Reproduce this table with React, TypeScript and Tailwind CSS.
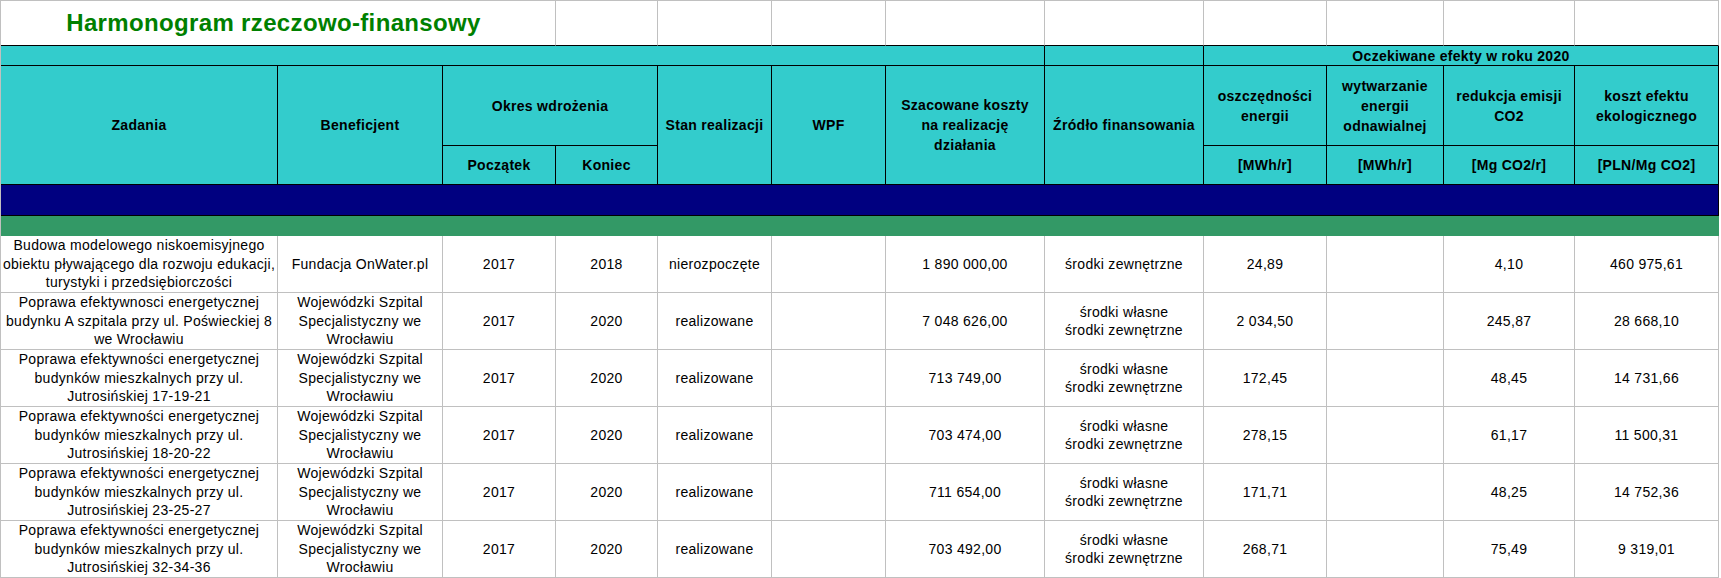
import * as React from "react";

const GRID =
    "grid grid-cols-[277px_165px_113px_102px_114px_114px_159px_159px_123px_117px_131px_144px] grid-rows-[46px_20px_80px_39px_31px_20px_repeat(6,57px)]";

const HEAD =
    "flex items-center justify-center text-center bg-[#33cccc] border-r border-b border-black font-bold text-[14px] leading-[20px] tracking-[0.3px] text-black";

const BODY =
    "flex flex-col items-center justify-center text-center border-r border-b border-[#c0c0c0] text-[14px] leading-[18.5px] tracking-[0.3px] text-black whitespace-nowrap";

interface Row {
    task: string[];
    beneficiary: string[];
    start: string;
    end: string;
    status: string;
    cost: string;
    source: string[];
    energy: string;
    renewable: string;
    co2: string;
    effectCost: string;
}

const WSS = ["Wojewódzki Szpital", "Specjalistyczny we", "Wrocławiu"];
const BOTH = ["środki własne", "środki zewnętrzne"];

const rows: Row[] = [
    {
        task: ["Budowa modelowego niskoemisyjnego", "obiektu pływającego dla rozwoju edukacji,", "turystyki i przedsiębiorczości"],
        beneficiary: ["Fundacja OnWater.pl"],
        start: "2017",
        end: "2018",
        status: "nierozpoczęte",
        cost: "1 890 000,00",
        source: ["środki zewnętrzne"],
        energy: "24,89",
        renewable: "",
        co2: "4,10",
        effectCost: "460 975,61",
    },
    {
        task: ["Poprawa efektywnosci energetycznej", "budynku A szpitala przy ul. Poświeckiej 8", "we Wrocławiu"],
        beneficiary: WSS,
        start: "2017",
        end: "2020",
        status: "realizowane",
        cost: "7 048 626,00",
        source: BOTH,
        energy: "2 034,50",
        renewable: "",
        co2: "245,87",
        effectCost: "28 668,10",
    },
    {
        task: ["Poprawa efektywności energetycznej", "budynków mieszkalnych przy ul.", "Jutrosińskiej 17-19-21"],
        beneficiary: WSS,
        start: "2017",
        end: "2020",
        status: "realizowane",
        cost: "713 749,00",
        source: BOTH,
        energy: "172,45",
        renewable: "",
        co2: "48,45",
        effectCost: "14 731,66",
    },
    {
        task: ["Poprawa efektywności energetycznej", "budynków mieszkalnych przy ul.", "Jutrosińskiej 18-20-22"],
        beneficiary: WSS,
        start: "2017",
        end: "2020",
        status: "realizowane",
        cost: "703 474,00",
        source: BOTH,
        energy: "278,15",
        renewable: "",
        co2: "61,17",
        effectCost: "11 500,31",
    },
    {
        task: ["Poprawa efektywności energetycznej", "budynków mieszkalnych przy ul.", "Jutrosińskiej 23-25-27"],
        beneficiary: WSS,
        start: "2017",
        end: "2020",
        status: "realizowane",
        cost: "711 654,00",
        source: BOTH,
        energy: "171,71",
        renewable: "",
        co2: "48,25",
        effectCost: "14 752,36",
    },
    {
        task: ["Poprawa efektywności energetycznej", "budynków mieszkalnych przy ul.", "Jutrosińskiej 32-34-36"],
        beneficiary: WSS,
        start: "2017",
        end: "2020",
        status: "realizowane",
        cost: "703 492,00",
        source: BOTH,
        energy: "268,71",
        renewable: "",
        co2: "75,49",
        effectCost: "9 319,01",
    },
];

function Lines({ lines }: { lines: string[] }) {
    return (
        <>
            {lines.map((l, i) => (
                <span key={i}>{l}</span>
            ))}
        </>
    );
}

export default function App() {
    return (
        <div className="w-[1721px] h-[578px] bg-white overflow-hidden font-['Liberation_Sans',Arial,sans-serif]">
            <div className={`${GRID} w-[1720px] border-l border-[#c0c0c0]`}>
                {/* Title row */}
                <div className="col-span-3 flex items-center justify-center pr-[9px] border-t border-r border-b border-t-[#c0c0c0] border-r-[#c0c0c0] border-b-black">
                    <span className="text-[24px] font-bold tracking-[0.35px] text-[#008000]">
                        Harmonogram rzeczowo-finansowy
                    </span>
                </div>
                {Array.from({ length: 9 }).map((_, i) => (
                    <div
                        key={i}
                        className="border-t border-r border-b border-t-[#c0c0c0] border-r-[#c0c0c0] border-b-black"
                    />
                ))}

                {/* Header top row */}
                <div className={`${HEAD} col-span-7`} />
                <div className={HEAD} />
                <div className={`${HEAD} col-span-4`}>Oczekiwane efekty w roku 2020</div>

                {/* Header main row */}
                <div className={`${HEAD} row-span-2`}>Zadania</div>
                <div className={`${HEAD} row-span-2`}>Beneficjent</div>
                <div className={`${HEAD} col-span-2`}>Okres wdrożenia</div>
                <div className={`${HEAD} row-span-2`}>Stan realizacji</div>
                <div className={`${HEAD} row-span-2`}>WPF</div>
                <div className={`${HEAD} row-span-2 flex-col`}>
                    <span>Szacowane koszty</span>
                    <span>na realizację</span>
                    <span>działania</span>
                </div>
                <div className={`${HEAD} row-span-2`}>Źródło finansowania</div>
                <div className={`${HEAD} flex-col`}>
                    <span>oszczędności</span>
                    <span>energii</span>
                </div>
                <div className={`${HEAD} flex-col`}>
                    <span>wytwarzanie</span>
                    <span>energii</span>
                    <span>odnawialnej</span>
                </div>
                <div className={`${HEAD} flex-col`}>
                    <span>redukcja emisji</span>
                    <span>CO2</span>
                </div>
                <div className={`${HEAD} flex-col`}>
                    <span>koszt efektu</span>
                    <span>ekologicznego</span>
                </div>

                {/* Header units row */}
                <div className={HEAD}>Początek</div>
                <div className={HEAD}>Koniec</div>
                <div className={HEAD}>[MWh/r]</div>
                <div className={HEAD}>[MWh/r]</div>
                <div className={HEAD}>[Mg CO2/r]</div>
                <div className={HEAD}>[PLN/Mg CO2]</div>

                {/* Colour bands */}
                <div className="col-span-12 bg-[#000080] border-r border-b border-black" />
                <div className="col-span-12 bg-[#339966]" />

                {/* Data rows */}
                {rows.map((r, i) => (
                    <React.Fragment key={i}>
                        <div className={BODY}>
                            <Lines lines={r.task} />
                        </div>
                        <div className={BODY}>
                            <Lines lines={r.beneficiary} />
                        </div>
                        <div className={BODY}>{r.start}</div>
                        <div className={BODY}>{r.end}</div>
                        <div className={BODY}>{r.status}</div>
                        <div className={BODY} />
                        <div className={BODY}>{r.cost}</div>
                        <div className={BODY}>
                            <Lines lines={r.source} />
                        </div>
                        <div className={BODY}>{r.energy}</div>
                        <div className={BODY}>{r.renewable}</div>
                        <div className={BODY}>{r.co2}</div>
                        <div className={BODY}>{r.effectCost}</div>
                    </React.Fragment>
                ))}
            </div>
        </div>
    );
}
